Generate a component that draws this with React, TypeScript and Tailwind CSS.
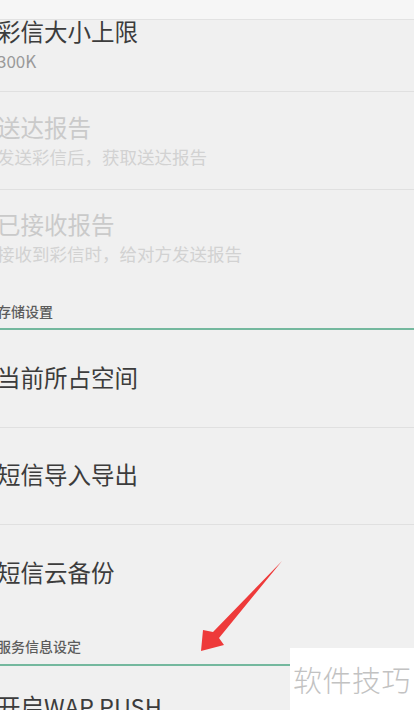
import React from "react";

const font = { fontFamily: '"Noto Sans CJK SC", "Noto Sans", sans-serif' };

function Arrow() {
  return (
    <svg className="absolute left-0 top-0 pointer-events-none" width="414" height="710" viewBox="0 0 414 710">
      <polygon
        points="282,561 219,638 224,645 201,651 203,630 213,632"
        fill="#ee3a3a"
      />
    </svg>
  );
}

export default function App() {
  return (
    <div className="relative w-[414px] h-[710px] overflow-hidden bg-[#f0f0f0]" style={font}>
      {/* top strip */}
      <div className="h-[20px] bg-[#f6f6f6] border-b border-[#e2e2e2]" />

      <div className="-ml-[3px]">
        {/* 彩信大小上限 */}
        <div className="h-[72px] border-b border-[#e0e0e0]">
          <div className="text-[23.5px] leading-none text-[#3c3c3c]">彩信大小上限</div>
          <div className="mt-[8px] text-[17px] leading-none text-[#9a9a9a]">300K</div>
        </div>

        {/* 送达报告 */}
        <div className="h-[98px] pt-[24px] border-b border-[#e0e0e0]">
          <div className="text-[23.5px] leading-none text-[#cacaca]">送达报告</div>
          <div className="mt-[8px] text-[17.5px] leading-none text-[#d2d2d2]">发送彩信后，获取送达报告</div>
        </div>

        {/* 已接收报告 */}
        <div className="h-[100px] pt-[23px]">
          <div className="text-[23.5px] leading-none text-[#cacaca]">已接收报告</div>
          <div className="mt-[8px] text-[17.5px] leading-none text-[#d2d2d2]">接收到彩信时，给对方发送报告</div>
        </div>

        {/* 存储设置 */}
        <div className="pt-[14px]">
          <div className="pb-[10px] text-[14px] leading-none font-medium text-[#5c5c5c]">存储设置</div>
          <div className="h-[2px] bg-[#74b89e]" />
        </div>

        <div className="h-[98px] pt-[36px] border-b border-[#e0e0e0]">
          <div className="text-[23.5px] leading-none text-[#3c3c3c]">当前所占空间</div>
        </div>
        <div className="h-[97px] pt-[35px] border-b border-[#e0e0e0]">
          <div className="text-[23.5px] leading-none text-[#3c3c3c]">短信导入导出</div>
        </div>
        <div className="h-[100px] pt-[36px]">
          <div className="text-[23.5px] leading-none text-[#3c3c3c]">短信云备份</div>
        </div>

        {/* 服务信息设定 */}
        <div className="pt-[14px]">
          <div className="pb-[11px] text-[14px] leading-none font-medium text-[#5c5c5c]">服务信息设定</div>
          <div className="h-[2px] bg-[#74b89e]" />
        </div>

        <div className="pt-[29px]">
          <div className="text-[23.5px] leading-none text-[#3c3c3c]">开启WAP PUSH</div>
        </div>
      </div>

      <Arrow />

      {/* watermark */}
      <div className="absolute left-[290px] top-[648px] w-[124px] h-[62px] bg-white flex items-center justify-center">
        <span className="text-[29px] leading-none font-light text-[#c2c2c2] tracking-[0.5px]">软件技巧</span>
      </div>
    </div>
  );
}
